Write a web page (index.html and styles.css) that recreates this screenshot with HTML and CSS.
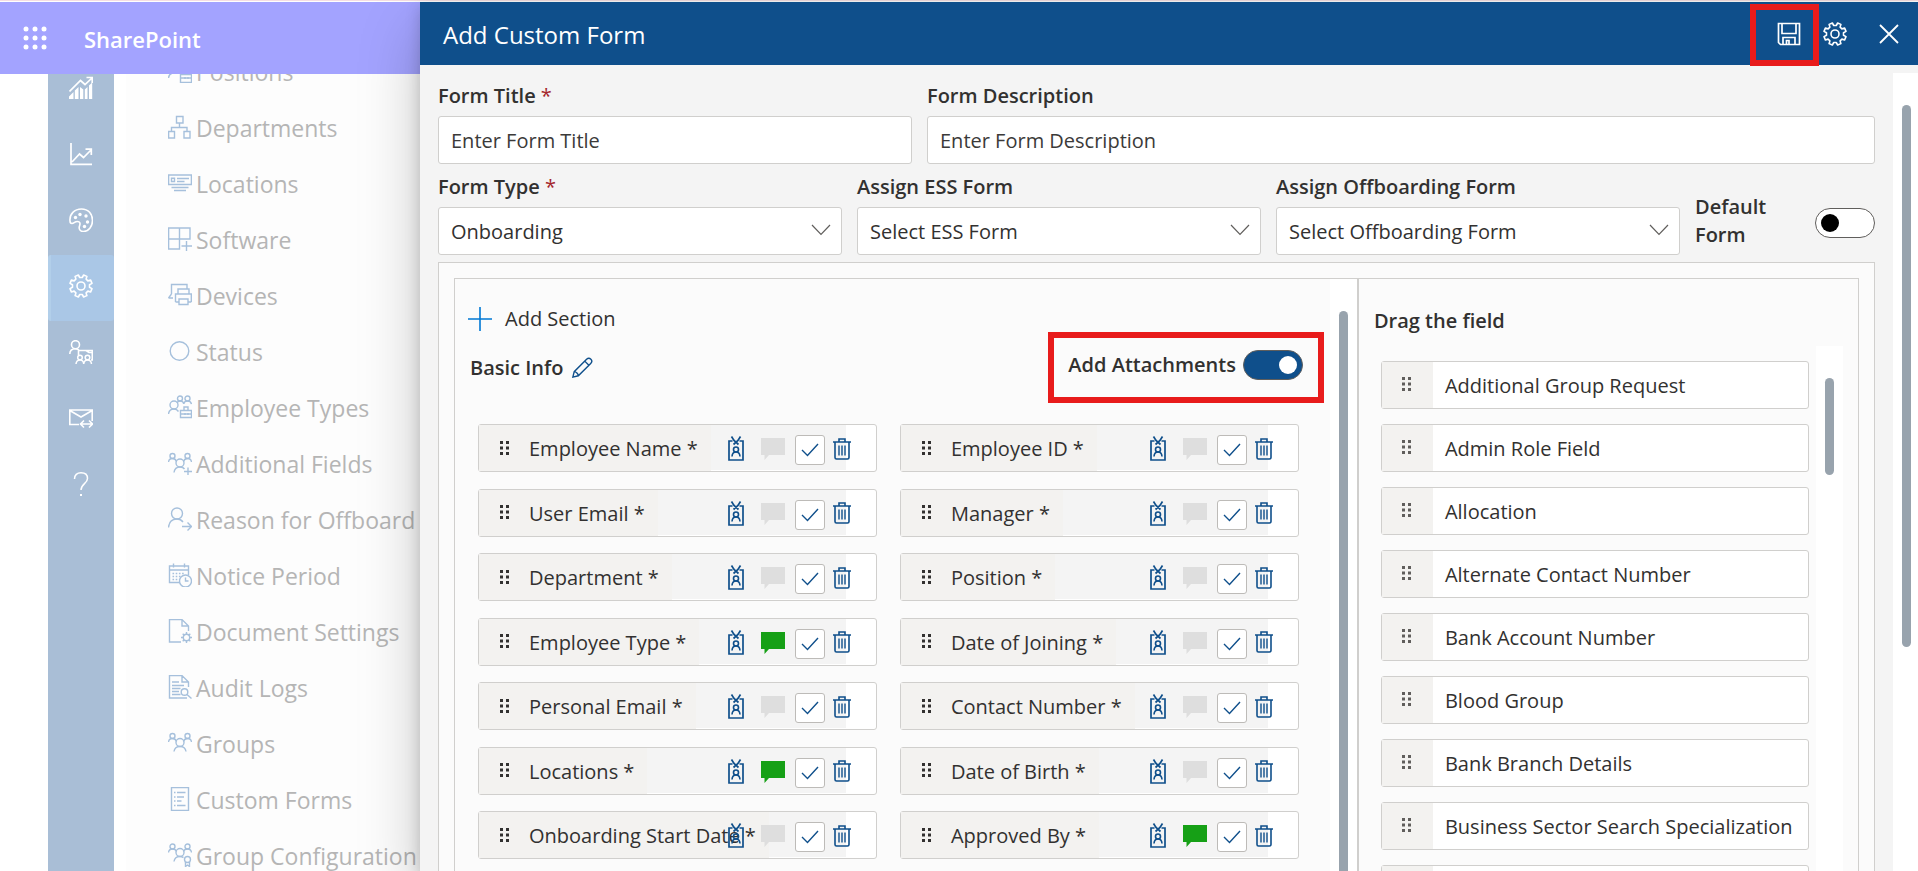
FILE: index.html
```html
<!DOCTYPE html>
<html lang="en">
<head>
<meta charset="utf-8">
<title>Add Custom Form</title>
<link rel="stylesheet" href="styles.css">
</head>
<body>
<svg class="sprite" aria-hidden="true">
  <symbol id="waffle" viewBox="0 0 24 24"><g fill="currentColor"><circle cx="3" cy="3" r="2.5"/><circle cx="12" cy="3" r="2.5"/><circle cx="21" cy="3" r="2.5"/><circle cx="3" cy="12" r="2.5"/><circle cx="12" cy="12" r="2.5"/><circle cx="21" cy="12" r="2.5"/><circle cx="3" cy="21" r="2.5"/><circle cx="12" cy="21" r="2.5"/><circle cx="21" cy="21" r="2.5"/></g></symbol>
  <symbol id="analytics" viewBox="0 0 24 24"><path d="M0 23V20.500L4.500 16V23zM5.800 23V14.500L9.500 11V23zM11 23V11L14.300 13.500V23zM15.800 23V13.500L18.500 11V23zM20 23V9.500L23.200 6.500V23z" fill="currentColor" stroke="none"/><path d="M.5 15.500 11.500 4.500 16 8.500 23 2M17.500 1.500H23.200V7" stroke-width="1.700"/></symbol>
  <symbol id="line-chart" viewBox="0 0 24 24"><path d="M2 1V22.300H23M3 20 10.500 12 14.500 15.500 22 8M16.500 7.200H22.300V13" stroke-width="1.700"/></symbol>
  <symbol id="palette" viewBox="0 0 24 24"><path d="M1 13C.3 6 5.500 1 12.500 1S23.500 6 23.500 12.500c0 6-4 11-9 11-3.500 0-5-2.500-4-5.500 1-2.700.5-4.500-2-4.500-3 0-3.500 2-5.500 2C1.500 15.500 1 14.500 1 13z" stroke-width="1.600"/><g fill="currentColor" stroke="none"><circle cx="6.500" cy="9.500" r="1.700"/><circle cx="11" cy="6.500" r="1.700"/><circle cx="17" cy="8" r="1.700"/><circle cx="18.500" cy="14" r="1.700"/><circle cx="15.500" cy="18.500" r="1.700"/></g></symbol>
  <symbol id="gear" viewBox="0 0 24 24"><path d="M13.270 3.490 14.640 1.010 17.900 2.370 17.120 5.090 18.910 6.880 21.630 6.100 22.990 9.360 20.510 10.730V13.270L22.990 14.640 21.630 17.900 18.910 17.120 17.120 18.910 17.900 21.630 14.640 22.990 13.270 20.510H10.730L9.360 22.990 6.100 21.630 6.880 18.910 5.090 17.120 2.370 17.900 1.010 14.640 3.490 13.270V10.730L1.010 9.360 2.370 6.100 5.090 6.880 6.880 5.090 6.100 2.370 9.360 1.010 10.730 3.490z" stroke-width="1.600" stroke-linejoin="round"/><circle cx="12" cy="12" r="4" stroke-width="1.600"/></symbol>
  <symbol id="training" viewBox="0 0 24 24"><circle cx="6.500" cy="4.700" r="4" stroke-width="1.600"/><path d="M.8 14c0-4 2.500-5.300 5.700-5.300 2 0 3 .8 4 2M9.500 15V10.500H23.300V20H22M17 10.500 20 12.500H23" stroke-width="1.600"/><circle cx="11" cy="17.500" r="2.300" stroke-width="1.500"/><circle cx="18.500" cy="17.500" r="2.300" stroke-width="1.500"/><path d="M7 24c.3-3 2-4 4-4s3.500 1 3.700 4c.3-3 1.800-4 3.800-4s3.700 1 4 4" stroke-width="1.500"/></symbol>
  <symbol id="mail" viewBox="0 0 24 24"><path d="M10 18.500H.8V4H23.200V15M.8 4.500 12 11 23.200 4.500M12 18H23M15 14.500 11.500 18 15 21.500M20 14.500 23.500 18 20 21.500" stroke-width="1.600"/></symbol>
  <symbol id="help" viewBox="0 0 24 24"><path d="M5.500 7C5.500 3 8 .8 12 .8S18.500 3 18.500 6.500C18.500 11.500 12 12 12 18" stroke-width="1.500"/><path d="M11 22h2v2h-2z" fill="currentColor" stroke="none"/></symbol>

  <symbol id="m-position" viewBox="0 0 24 24"><circle cx="6" cy="10" r="4"/><path d="M.5 19C1 15 3 14 6 14M12.500 15.500H23.500V23.500H12.500zM12.500 19H23.500M16 15V12.500H20V15M17 18v2M20 18v2"/></symbol>
  <symbol id="m-department" viewBox="0 0 24 24"><path d="M8.500 1.500H15V8H8.500zM.6 16.500H6.500V23H.6zM16 16.500H22V23H16zM11.500 8V12.500M3.500 16.500V12.500H19V16.500"/></symbol>
  <symbol id="m-location" viewBox="0 0 24 24"><path d="M.6 4H23.400V13.500H.6zM3.500 7.200H6.500V10.500H3.500zM9 7.500H21M9 10.500H16.500M3.500 16.500H20.500M6 19.500H18"/></symbol>
  <symbol id="m-software" viewBox="0 0 24 24"><path d="M.6 1H22V12H.6zM11.500 1V22H.6V12M18.500 14V24M13.500 19H24"/></symbol>
  <symbol id="m-device" viewBox="0 0 24 24"><path d="M3.500 11V1.500H19V6M.5 15H5M.5 15 3.500 11M10 11V6H21V11M7.500 19V11H23.300V19M11 16H20V21.500H11zM7.500 19H11M20 19H23.300"/></symbol>
  <symbol id="m-status" viewBox="0 0 24 24"><circle cx="11.500" cy="12" r="9.300"/></symbol>
  <symbol id="m-employee" viewBox="0 0 24 24"><circle cx="6" cy="10" r="4"/><circle cx="12" cy="3.500" r="2.500"/><circle cx="19.500" cy="3.500" r="2.500"/><path d="M.5 19C1 15 3 14 6 14 8 14 9.500 15 10.500 16.500M9 8C9.500 6.500 10.500 6 12 6s3.500 1 3.800 3C16 7 17.500 6 19.500 6S23 7 23.500 9M12.500 15.500H23.500V22.500H12.500zM12.500 19H23.500M16 15V12H20V15M17 18v2M20 18v2"/></symbol>
  <symbol id="m-fields" viewBox="0 0 24 24"><circle cx="4.500" cy="5" r="2.500"/><circle cx="19.500" cy="5" r="2.500"/><circle cx="12" cy="12" r="4"/><path d="M.5 11C.8 8.500 2.500 7.500 4.500 7.500S8 9 8.500 10.500M23.500 11C23.200 8.500 21.500 7.500 19.500 7.500S16 9 15.500 10.500M6 21.500C6.500 17.500 9 16 12 16 14 16 15.500 16.500 16.500 18M20 16.500V24M16 20.500H24"/></symbol>
  <symbol id="m-reason" viewBox="0 0 24 24"><circle cx="9" cy="6.500" r="5.500"/><path d="M.5 20.500C1 14 4.500 12 9 12 11.500 12 13.500 13 15 15M14 19.500H23.500M19.500 15.500 23.500 19.500 19.500 23.500"/></symbol>
  <symbol id="m-notice" viewBox="0 0 24 24"><path d="M12 19.500H1.500V3H20.500V12M1.500 7H20.500M5.500.5V4.500M16.500.5V4.500"/><path d="M4.500 10.500H17M4.500 13.500H14M4.500 16.500H12" stroke-dasharray="1.600 1.600"/><circle cx="17.500" cy="18" r="6"/><path d="M17.500 14.500V18H20.500"/></symbol>
  <symbol id="m-document" viewBox="0 0 24 24"><path d="M13 23H1.500V.6H14L20.500 7V12M14 .6V7H20.500"/><circle cx="18.500" cy="18.500" r="3.200"/><path d="M18.500 13V15M18.500 22V24M13 18.500H15M22 18.500H24M14.700 14.700 16.200 16.200M20.800 20.800 22.300 22.300M14.700 22.300 16.200 20.800M20.800 16.200 22.300 14.700"/></symbol>
  <symbol id="m-audit" viewBox="0 0 24 24"><path d="M19 23H1.500V.6H14L20.500 7V12M14 .6V7H20.500M4 7H11M4 10.500H16M4 13.500H12.500M4 16.500H11M4 19.500H12.500M19 19.500 23.500 23.500"/><circle cx="16.500" cy="17" r="3.300"/></symbol>
  <symbol id="m-groups" viewBox="0 0 24 24"><circle cx="4.500" cy="5" r="2.500"/><circle cx="19.500" cy="5" r="2.500"/><circle cx="12" cy="11.500" r="4"/><path d="M.5 11C.8 8.500 2.500 7.500 4.500 7.500S8 9 8.500 10.500M23.500 11C23.200 8.500 21.500 7.500 19.500 7.500S16 9 15.500 10.500M6 20.500C6.500 17 9 15.500 12 15.500S17.500 17 18 20.500"/></symbol>
  <symbol id="m-forms" viewBox="0 0 24 24"><path d="M3.500.6H20.500V23.400H3.500zM9 5.500H17.500M9 10H16M9 14H13.500M9 18.500H17.500M6 5.500H7.500M6 10H7.500M6 14H7.500M6 18.500H7.500"/></symbol>
  <symbol id="m-config" viewBox="0 0 24 24"><circle cx="4.500" cy="3.500" r="2.500"/><circle cx="19.500" cy="3.500" r="2.500"/><circle cx="12" cy="9.500" r="4"/><circle cx="19.500" cy="16.500" r="3"/><path d="M.5 9.500C.8 7 2.500 6 4.500 6S8 7 8.500 8.500M23.500 9.500C23.200 7 21.500 6 19.500 6S16 7 15.500 8.500M6 18.500C6.500 15 9 13.500 12 13.500 13.500 13.500 14.500 14 15.500 14.500M17.500 19V23.500L19.500 22 21.500 23.500V19"/></symbol>

  <symbol id="save" viewBox="0 0 24 24"><path d="M1.500 1.500H22.500V22.500H3.500L1.500 20.500zM5 1.500V11.500H19V1.500M6 22.500V15.500H18V22.500M9.500 22.500V18.500H12V22.500" stroke-width="1.700"/></symbol>
  <symbol id="close" viewBox="0 0 24 24"><path d="M3 3 21 21M21 3 3 21" stroke-width="1.800"/></symbol>
  <symbol id="plus" viewBox="0 0 24 24"><path d="M12 0V24M0 12H24" stroke-width="1.600"/></symbol>
  <symbol id="pencil" viewBox="0 0 24 24"><path d="M2 22 3.500 16 17 2.500C18.500 1 20.500 1.200 21.700 2.400 22.800 3.500 23 5.500 21.500 7L8 20.500zM3.500 16C5.500 16 8 18.500 8 20.500M15 4.500 19.500 9" stroke-width="1.500"/></symbol>
  <symbol id="chevron" viewBox="0 0 20 12"><path d="M1 1 10 10.500 19 1" stroke-width="1.200"/></symbol>
  <symbol id="grip" viewBox="0 0 10 14"><path d="M0 0h3v3H0zM6 0h3v3H6zM0 5.500h3v3H0zM6 5.500h3v3H6zM0 11h3v3H0zM6 11h3v3H6z" fill="currentColor" stroke="none"/></symbol>
  <symbol id="badge" viewBox="0 0 18 25"><path d="M5.500 5H2V24H16V5H12.500M4.500.5 7 4.500 11.500 8.500M13.500.5 11 4.500 6.500 8.500" stroke-width="1.700"/><circle cx="9" cy="13.500" r="2.500" stroke-width="1.600"/><path d="M5 20.500C5.200 17.500 6.500 16 9 16S12.800 17.500 13 20.500" stroke-width="1.600"/></symbol>
  <symbol id="comment" viewBox="0 0 24 22"><path d="M0 0H24V17H8L3.500 22V17H0z" fill="currentColor" stroke="none"/></symbol>
  <symbol id="tick" viewBox="0 0 18 14"><path d="M1 7 6.500 12.500 17 1" stroke-width="1.400"/></symbol>
  <symbol id="trash" viewBox="0 0 18 22"><path d="M0 4H18M6 4V1H12V4M2 4V19.500Q2 21 3.500 21H14.500Q16 21 16 19.500V4" stroke-width="1.600"/><path d="M6 7.500V17.500M9 7.500V17.500M12 7.500V17.500" stroke-width="1.400"/></symbol>
</svg>

<div class="topline"></div>
<div class="shell">
  <div class="site">
    <header class="suite">
      <button class="icon-btn" aria-label="App launcher"><svg class="i24"><use href="#waffle"/></svg></button>
      <a class="brand" href="#">SharePoint</a>
    </header>
    <div class="site-body">
      <nav class="rail" aria-label="Main">
        <a href="#" aria-label="Analytics"><svg class="i24"><use href="#analytics"/></svg></a>
        <a href="#" aria-label="Reports"><svg class="i24"><use href="#line-chart"/></svg></a>
        <a href="#" aria-label="Theme"><svg class="i24"><use href="#palette"/></svg></a>
        <a href="#" aria-label="Settings" class="active"><svg class="i24"><use href="#gear"/></svg></a>
        <a href="#" aria-label="Training"><svg class="i24"><use href="#training"/></svg></a>
        <a href="#" aria-label="Mail"><svg class="i24"><use href="#mail"/></svg></a>
        <a href="#" aria-label="Help"><svg class="i24"><use href="#help"/></svg></a>
      </nav>
      <nav class="menu" aria-label="Settings">
        <a href="#"><svg class="i24"><use href="#m-position"/></svg>Positions</a>
        <a href="#"><svg class="i24"><use href="#m-department"/></svg>Departments</a>
        <a href="#"><svg class="i24"><use href="#m-location"/></svg>Locations</a>
        <a href="#"><svg class="i24"><use href="#m-software"/></svg>Software</a>
        <a href="#"><svg class="i24"><use href="#m-device"/></svg>Devices</a>
        <a href="#"><svg class="i24"><use href="#m-status"/></svg>Status</a>
        <a href="#"><svg class="i24"><use href="#m-employee"/></svg>Employee Types</a>
        <a href="#"><svg class="i24"><use href="#m-fields"/></svg>Additional Fields</a>
        <a href="#"><svg class="i24"><use href="#m-reason"/></svg>Reason for Offboard</a>
        <a href="#"><svg class="i24"><use href="#m-notice"/></svg>Notice Period</a>
        <a href="#"><svg class="i24"><use href="#m-document"/></svg>Document Settings</a>
        <a href="#"><svg class="i24"><use href="#m-audit"/></svg>Audit Logs</a>
        <a href="#"><svg class="i24"><use href="#m-groups"/></svg>Groups</a>
        <a href="#"><svg class="i24"><use href="#m-forms"/></svg>Custom Forms</a>
        <a href="#"><svg class="i24"><use href="#m-config"/></svg>Group Configuration</a>
      </nav>
    </div>
  </div>

  <main class="panel">
    <header class="panel-head">
      <h1>Add Custom Form</h1>
      <button class="icon-btn marked-save" aria-label="Save"><svg class="i24"><use href="#save"/></svg></button>
      <button class="icon-btn settings" aria-label="Settings"><svg class="i24"><use href="#gear"/></svg></button>
      <button class="icon-btn" aria-label="Close"><svg class="i24"><use href="#close"/></svg></button>
    </header>
    <div class="panel-body">
      <form class="content">
        <div class="row titles">
          <div class="field"><label for="title">Form Title <span class="req">*</span></label><input id="title" type="text" placeholder="Enter Form Title"></div>
          <div class="field"><label for="desc">Form Description</label><input id="desc" type="text" placeholder="Enter Form Description"></div>
        </div>
        <div class="row types">
          <div class="field"><label for="type">Form Type <span class="req">*</span></label><div class="select"><select id="type"><option>Onboarding</option></select><svg><use href="#chevron"/></svg></div></div>
          <div class="field"><label for="ess">Assign ESS Form</label><div class="select"><select id="ess"><option>Select ESS Form</option></select><svg><use href="#chevron"/></svg></div></div>
          <div class="field"><label for="off">Assign Offboarding Form</label><div class="select"><select id="off"><option>Select Offboarding Form</option></select><svg><use href="#chevron"/></svg></div></div>
          <div class="default"><label for="default">Default Form</label><input id="default" class="toggle" type="checkbox" role="switch"></div>
        </div>

        <div class="builder">
          <div class="builder-inner">
            <section class="canvas">
              <div class="canvas-main">
                <button type="button" class="add"><svg class="i24"><use href="#plus"/></svg>Add Section</button>
                <div class="section-head">
                  <h2>Basic Info</h2>
                  <button type="button" class="icon-btn edit" aria-label="Edit section name"><svg><use href="#pencil"/></svg></button>
                  <div class="attach"><label for="attach">Add Attachments</label><input id="attach" class="toggle" type="checkbox" role="switch" checked></div>
                </div>
                <div class="cards">
                  <div class="card"><div class="strip"><span class="name"><svg class="grip"><use href="#grip"/></svg>Employee Name *</span></div><div class="acts"><button type="button" class="icon-btn" aria-label="Card"><svg class="badge"><use href="#badge"/></svg></button><button type="button" class="icon-btn" aria-label="Comment"><svg class="comment"><use href="#comment"/></svg></button><label class="tick"><input type="checkbox" checked aria-label="Required"><svg><use href="#tick"/></svg></label><button type="button" class="icon-btn" aria-label="Delete"><svg class="trash"><use href="#trash"/></svg></button></div></div>
                  <div class="card"><div class="strip"><span class="name"><svg class="grip"><use href="#grip"/></svg>Employee ID *</span></div><div class="acts"><button type="button" class="icon-btn" aria-label="Card"><svg class="badge"><use href="#badge"/></svg></button><button type="button" class="icon-btn" aria-label="Comment"><svg class="comment"><use href="#comment"/></svg></button><label class="tick"><input type="checkbox" checked aria-label="Required"><svg><use href="#tick"/></svg></label><button type="button" class="icon-btn" aria-label="Delete"><svg class="trash"><use href="#trash"/></svg></button></div></div>
                  <div class="card"><div class="strip"><span class="name"><svg class="grip"><use href="#grip"/></svg>User Email *</span></div><div class="acts"><button type="button" class="icon-btn" aria-label="Card"><svg class="badge"><use href="#badge"/></svg></button><button type="button" class="icon-btn" aria-label="Comment"><svg class="comment"><use href="#comment"/></svg></button><label class="tick"><input type="checkbox" checked aria-label="Required"><svg><use href="#tick"/></svg></label><button type="button" class="icon-btn" aria-label="Delete"><svg class="trash"><use href="#trash"/></svg></button></div></div>
                  <div class="card"><div class="strip"><span class="name"><svg class="grip"><use href="#grip"/></svg>Manager *</span></div><div class="acts"><button type="button" class="icon-btn" aria-label="Card"><svg class="badge"><use href="#badge"/></svg></button><button type="button" class="icon-btn" aria-label="Comment"><svg class="comment"><use href="#comment"/></svg></button><label class="tick"><input type="checkbox" checked aria-label="Required"><svg><use href="#tick"/></svg></label><button type="button" class="icon-btn" aria-label="Delete"><svg class="trash"><use href="#trash"/></svg></button></div></div>
                  <div class="card"><div class="strip"><span class="name"><svg class="grip"><use href="#grip"/></svg>Department *</span></div><div class="acts"><button type="button" class="icon-btn" aria-label="Card"><svg class="badge"><use href="#badge"/></svg></button><button type="button" class="icon-btn" aria-label="Comment"><svg class="comment"><use href="#comment"/></svg></button><label class="tick"><input type="checkbox" checked aria-label="Required"><svg><use href="#tick"/></svg></label><button type="button" class="icon-btn" aria-label="Delete"><svg class="trash"><use href="#trash"/></svg></button></div></div>
                  <div class="card"><div class="strip"><span class="name"><svg class="grip"><use href="#grip"/></svg>Position *</span></div><div class="acts"><button type="button" class="icon-btn" aria-label="Card"><svg class="badge"><use href="#badge"/></svg></button><button type="button" class="icon-btn" aria-label="Comment"><svg class="comment"><use href="#comment"/></svg></button><label class="tick"><input type="checkbox" checked aria-label="Required"><svg><use href="#tick"/></svg></label><button type="button" class="icon-btn" aria-label="Delete"><svg class="trash"><use href="#trash"/></svg></button></div></div>
                  <div class="card"><div class="strip"><span class="name"><svg class="grip"><use href="#grip"/></svg>Employee Type *</span></div><div class="acts"><button type="button" class="icon-btn" aria-label="Card"><svg class="badge"><use href="#badge"/></svg></button><button type="button" class="icon-btn" aria-label="Comment"><svg class="comment on"><use href="#comment"/></svg></button><label class="tick"><input type="checkbox" checked aria-label="Required"><svg><use href="#tick"/></svg></label><button type="button" class="icon-btn" aria-label="Delete"><svg class="trash"><use href="#trash"/></svg></button></div></div>
                  <div class="card"><div class="strip"><span class="name"><svg class="grip"><use href="#grip"/></svg>Date of Joining *</span></div><div class="acts"><button type="button" class="icon-btn" aria-label="Card"><svg class="badge"><use href="#badge"/></svg></button><button type="button" class="icon-btn" aria-label="Comment"><svg class="comment"><use href="#comment"/></svg></button><label class="tick"><input type="checkbox" checked aria-label="Required"><svg><use href="#tick"/></svg></label><button type="button" class="icon-btn" aria-label="Delete"><svg class="trash"><use href="#trash"/></svg></button></div></div>
                  <div class="card"><div class="strip"><span class="name"><svg class="grip"><use href="#grip"/></svg>Personal Email *</span></div><div class="acts"><button type="button" class="icon-btn" aria-label="Card"><svg class="badge"><use href="#badge"/></svg></button><button type="button" class="icon-btn" aria-label="Comment"><svg class="comment"><use href="#comment"/></svg></button><label class="tick"><input type="checkbox" checked aria-label="Required"><svg><use href="#tick"/></svg></label><button type="button" class="icon-btn" aria-label="Delete"><svg class="trash"><use href="#trash"/></svg></button></div></div>
                  <div class="card"><div class="strip"><span class="name"><svg class="grip"><use href="#grip"/></svg>Contact Number *</span></div><div class="acts"><button type="button" class="icon-btn" aria-label="Card"><svg class="badge"><use href="#badge"/></svg></button><button type="button" class="icon-btn" aria-label="Comment"><svg class="comment"><use href="#comment"/></svg></button><label class="tick"><input type="checkbox" checked aria-label="Required"><svg><use href="#tick"/></svg></label><button type="button" class="icon-btn" aria-label="Delete"><svg class="trash"><use href="#trash"/></svg></button></div></div>
                  <div class="card"><div class="strip"><span class="name"><svg class="grip"><use href="#grip"/></svg>Locations *</span></div><div class="acts"><button type="button" class="icon-btn" aria-label="Card"><svg class="badge"><use href="#badge"/></svg></button><button type="button" class="icon-btn" aria-label="Comment"><svg class="comment on"><use href="#comment"/></svg></button><label class="tick"><input type="checkbox" checked aria-label="Required"><svg><use href="#tick"/></svg></label><button type="button" class="icon-btn" aria-label="Delete"><svg class="trash"><use href="#trash"/></svg></button></div></div>
                  <div class="card"><div class="strip"><span class="name"><svg class="grip"><use href="#grip"/></svg>Date of Birth *</span></div><div class="acts"><button type="button" class="icon-btn" aria-label="Card"><svg class="badge"><use href="#badge"/></svg></button><button type="button" class="icon-btn" aria-label="Comment"><svg class="comment"><use href="#comment"/></svg></button><label class="tick"><input type="checkbox" checked aria-label="Required"><svg><use href="#tick"/></svg></label><button type="button" class="icon-btn" aria-label="Delete"><svg class="trash"><use href="#trash"/></svg></button></div></div>
                  <div class="card"><div class="strip"><span class="name"><svg class="grip"><use href="#grip"/></svg>Onboarding Start Date *</span></div><div class="acts"><button type="button" class="icon-btn" aria-label="Card"><svg class="badge"><use href="#badge"/></svg></button><button type="button" class="icon-btn" aria-label="Comment"><svg class="comment"><use href="#comment"/></svg></button><label class="tick"><input type="checkbox" checked aria-label="Required"><svg><use href="#tick"/></svg></label><button type="button" class="icon-btn" aria-label="Delete"><svg class="trash"><use href="#trash"/></svg></button></div></div>
                  <div class="card"><div class="strip"><span class="name"><svg class="grip"><use href="#grip"/></svg>Approved By *</span></div><div class="acts"><button type="button" class="icon-btn" aria-label="Card"><svg class="badge"><use href="#badge"/></svg></button><button type="button" class="icon-btn" aria-label="Comment"><svg class="comment on"><use href="#comment"/></svg></button><label class="tick"><input type="checkbox" checked aria-label="Required"><svg><use href="#tick"/></svg></label><button type="button" class="icon-btn" aria-label="Delete"><svg class="trash"><use href="#trash"/></svg></button></div></div>
                </div>
              </div>
              <div class="track canvas-track"><div class="thumb"></div></div>
            </section>
            <section class="source">
              <h2>Drag the field</h2>
              <div class="source-scroll">
                <ul>
                  <li><span class="handle"><svg class="grip"><use href="#grip"/></svg></span>Additional Group Request</li>
                  <li><span class="handle"><svg class="grip"><use href="#grip"/></svg></span>Admin Role Field</li>
                  <li><span class="handle"><svg class="grip"><use href="#grip"/></svg></span>Allocation</li>
                  <li><span class="handle"><svg class="grip"><use href="#grip"/></svg></span>Alternate Contact Number</li>
                  <li><span class="handle"><svg class="grip"><use href="#grip"/></svg></span>Bank Account Number</li>
                  <li><span class="handle"><svg class="grip"><use href="#grip"/></svg></span>Blood Group</li>
                  <li><span class="handle"><svg class="grip"><use href="#grip"/></svg></span>Bank Branch Details</li>
                  <li><span class="handle"><svg class="grip"><use href="#grip"/></svg></span>Business Sector Search Specialization</li>
                  <li><span class="handle"></span></li>
                </ul>
                <div class="track source-track"><div class="thumb"></div></div>
              </div>
            </section>
          </div>
        </div>
      </form>
      <div class="track panel-track"><div class="thumb"></div></div>
    </div>
  </main>
</div>
</body>
</html>
```

FILE: styles.css
```css
* { box-sizing: border-box; }

body {
  margin: 0;
  height: 100vh;
  overflow: hidden;
  display: flex;
  flex-direction: column;
  background: #fff;
  color: #323130;
  font: 20px/28px "Open Sans", "Noto Sans", sans-serif;
}

a { color: inherit; text-decoration: none; }
h1, h2, ul { margin: 0; padding: 0; font-size: inherit; list-style: none; }
h2 { font-weight: 600; }
button, input, select { font: inherit; color: inherit; }
svg { display: block; flex: none; fill: none; stroke: currentColor; stroke-width: 1.2; }
.sprite { position: absolute; width: 0; height: 0; }
.i24 { width: 24px; height: 24px; }
.icon-btn { display: block; flex: none; padding: 0; border: 0; background: none; }

.topline { flex: none; height: 2px; background: #fff; border-top: 1px solid #f6dfe2; }
.shell { flex: 1; min-height: 0; display: flex; }

/* Dimmed site behind the panel */
.site { flex: none; width: 420px; display: flex; flex-direction: column; overflow: hidden; }
.suite {
  flex: none;
  height: 72px;
  display: flex;
  align-items: center;
  gap: 37px;
  padding-left: 23px;
  background: #a3a3ff;
  color: #fff;
}
.suite svg { stroke: none; }
.brand { font-size: 22px; font-weight: 600; padding-top: 2px; }
.site-body { flex: 1; min-height: 0; display: flex; overflow: hidden; padding-left: 48px; }
.rail { flex: none; width: 66px; background: #a9bed6; color: #fff; margin-top: -17px; }
.rail a { height: 66px; display: flex; align-items: center; justify-content: center; padding: 0 1px 4px 0; }
.rail .active { background: #aac7e6; border-left: 3px solid #b2cfea; border-radius: 3px; padding-right: 4px; }
.menu { flex: 1; margin: -30px 0 0 12px; padding-left: 42px; background: #fdfdfd; color: #b5b5b5; font-size: 23px; }
.menu a { height: 56px; display: flex; align-items: center; gap: 4px; white-space: nowrap; }
.menu svg { color: #a6c0dc; stroke-width: 1.4; margin-bottom: 3px; }

/* Panel */
.panel {
  flex: 1;
  min-width: 0;
  display: flex;
  flex-direction: column;
  position: relative;
  background: #f4f4f4;
  box-shadow: 0 26px 58px rgba(0, 0, 0, .22), 0 5px 14px rgba(0, 0, 0, .18);
}
.panel-head {
  flex: none;
  height: 63px;
  display: flex;
  align-items: center;
  padding: 0 17px 0 23px;
  background: #0f4f8b;
  color: #fff;
}
.panel-head h1 { flex: 1; padding-top: 3px; font-size: 24px; font-weight: 400; }
.marked-save {
  width: 69px;
  height: 62px;
  padding: 0 0 2px 21px;
  margin-top: 3px;
  border: 6px solid #e81b1b;
}
.settings { margin: 0 30px 0 4px; }

.panel-body { flex: 1; min-height: 0; display: flex; overflow: hidden; }
.content { flex: 1; min-width: 0; display: flex; flex-direction: column; padding: 17px 18px 0; }
.row { flex: none; display: grid; column-gap: 15px; }
.titles { grid-template-columns: 1fr 2fr; }
.types { grid-template-columns: repeat(3, 1fr) 180px; margin-top: 9px; }
.field { display: flex; flex-direction: column; gap: 6px; min-width: 0; }
.field label, .default label, .attach label { font-weight: 600; }
.req { color: #a4262c; font-weight: 400; }
.field input, .select select {
  width: 100%;
  height: 48px;
  padding: 0 12px;
  border: 1px solid #d0cfcd;
  border-radius: 3px;
  background: #fff;
  outline: 0;
}
.field input::placeholder { color: #3b3a39; opacity: 1; }
.select { position: relative; }
.select select { appearance: none; display: block; padding-top: 1px; }
.select svg { position: absolute; right: 11px; top: 17px; width: 20px; height: 12px; color: #605e5c; pointer-events: none; }
.default { display: flex; align-items: flex-end; justify-content: space-between; padding-bottom: 6px; }
.default label { width: 90px; }
.default .toggle { margin-bottom: 11px; }

.toggle {
  appearance: none;
  flex: none;
  display: flex;
  align-items: center;
  width: 60px;
  height: 30px;
  margin: 0;
  padding: 0 5px;
  border: 1px solid #605e5c;
  border-radius: 15px;
  background: #fff;
}
.toggle::before { content: ""; width: 18px; height: 18px; border-radius: 50%; background: #000; }
.toggle:checked { justify-content: flex-end; background: #0f4f8b; }
.toggle:checked::before { background: #fff; }

/* Scrollbars */
.track { flex: none; background: #fff; }
.thumb { width: 9px; margin-left: 9px; border-radius: 5px; background: #98a3ad; }
.panel-track { width: 25px; margin-top: 8px; padding-top: 32px; }
.panel-track .thumb { height: 542px; }
.canvas-track { width: 27px; padding-top: 32px; }
.canvas-track .thumb { height: 100%; border-radius: 5px 5px 0 0; }
.source-track { width: 27px; padding-top: 32px; }
.source-track .thumb { height: 97px; }

/* Form builder */
.builder {
  flex: 1 0 auto;
  display: flex;
  margin-top: 7px;
  padding: 15px 15px 0;
  border: 1px solid #d0cfcd;
  border-bottom: 0;
  background: #fbfbfb;
}
.builder-inner {
  flex: 1;
  min-width: 0;
  display: grid;
  grid-template-columns: 9fr 5fr;
  border: 1px solid #d0cfcd;
  border-bottom: 0;
}
.canvas { min-width: 0; display: flex; }
.canvas-main { flex: 1; min-width: 0; padding: 26px 31px 0 13px; }
.add { display: flex; align-items: center; gap: 13px; height: 27px; padding: 0; border: 0; background: none; }
.add svg { color: #0078d4; }
.section-head { display: flex; align-items: center; height: 71px; margin-right: -25px; padding-left: 2px; }
.edit { margin-left: 8px; color: #0f4f8b; }
.edit svg { width: 22px; height: 22px; }
.attach {
  display: flex;
  align-items: center;
  gap: 7px;
  height: 71px;
  margin-left: auto;
  padding: 0 15px 5px 14px;
  border: 6px solid #e81b1b;
}
.cards {
  display: grid;
  grid-template-columns: 1fr 1fr;
  column-gap: 23px;
  align-content: space-between;
  min-height: 435px;
  margin: 21px 0 0 10px;
}
.card {
  position: relative;
  height: 48px;
  padding-right: 30px;
  border: 1px solid #d0cfcd;
  border-radius: 3px;
  background: #fff;
}
.strip { height: 100%; display: flex; background: #f4f4f4; border-bottom: 1px solid #fff; }
.name { display: flex; align-items: center; gap: 19px; margin-bottom: -1px; padding: 2px 13px 0 21px; background: #f3f2f0; white-space: nowrap; }
.grip { width: 10px; height: 14px; margin-bottom: 3px; }
.acts { position: absolute; top: 10px; right: 25px; display: flex; align-items: center; color: #0f4f8b; }
.badge { width: 18px; height: 25px; margin: 0 16px 3px 0; }
.comment { width: 24px; height: 22px; margin: 0 10px 2px 0; color: #dedede; }
.comment.on { color: #16a016; }
.tick { position: relative; width: 30px; height: 30px; margin-right: 8px; }
.tick input { appearance: none; display: block; width: 30px; height: 30px; margin: 0; border: 1px solid #bdbbb8; border-radius: 3px; background: #fff; }
.tick svg { position: absolute; left: 6px; top: 8px; width: 18px; height: 14px; }
.trash { width: 18px; height: 22px; margin-bottom: 3px; }

.source { min-width: 0; display: flex; flex-direction: column; padding-top: 28px; border-left: 2px solid #d0cfcd; }
.source h2 { margin: 0 15px 11px; }
.source-scroll { flex: 1; display: flex; gap: 7px; padding-right: 15px; }
.source ul { flex: 1; min-width: 0; display: flex; flex-direction: column; gap: 15px; padding: 15px 0 0 22px; }
.source li {
  height: 48px;
  display: flex;
  align-items: center;
  gap: 12px;
  padding-top: 2px;
  border: 1px solid #d0cfcd;
  border-radius: 3px;
  background: #fff;
  white-space: nowrap;
}
.handle { width: 51px; height: 46px; margin-top: -2px; display: flex; align-items: center; justify-content: center; background: #f3f2f0; color: #605e5c; }
```
